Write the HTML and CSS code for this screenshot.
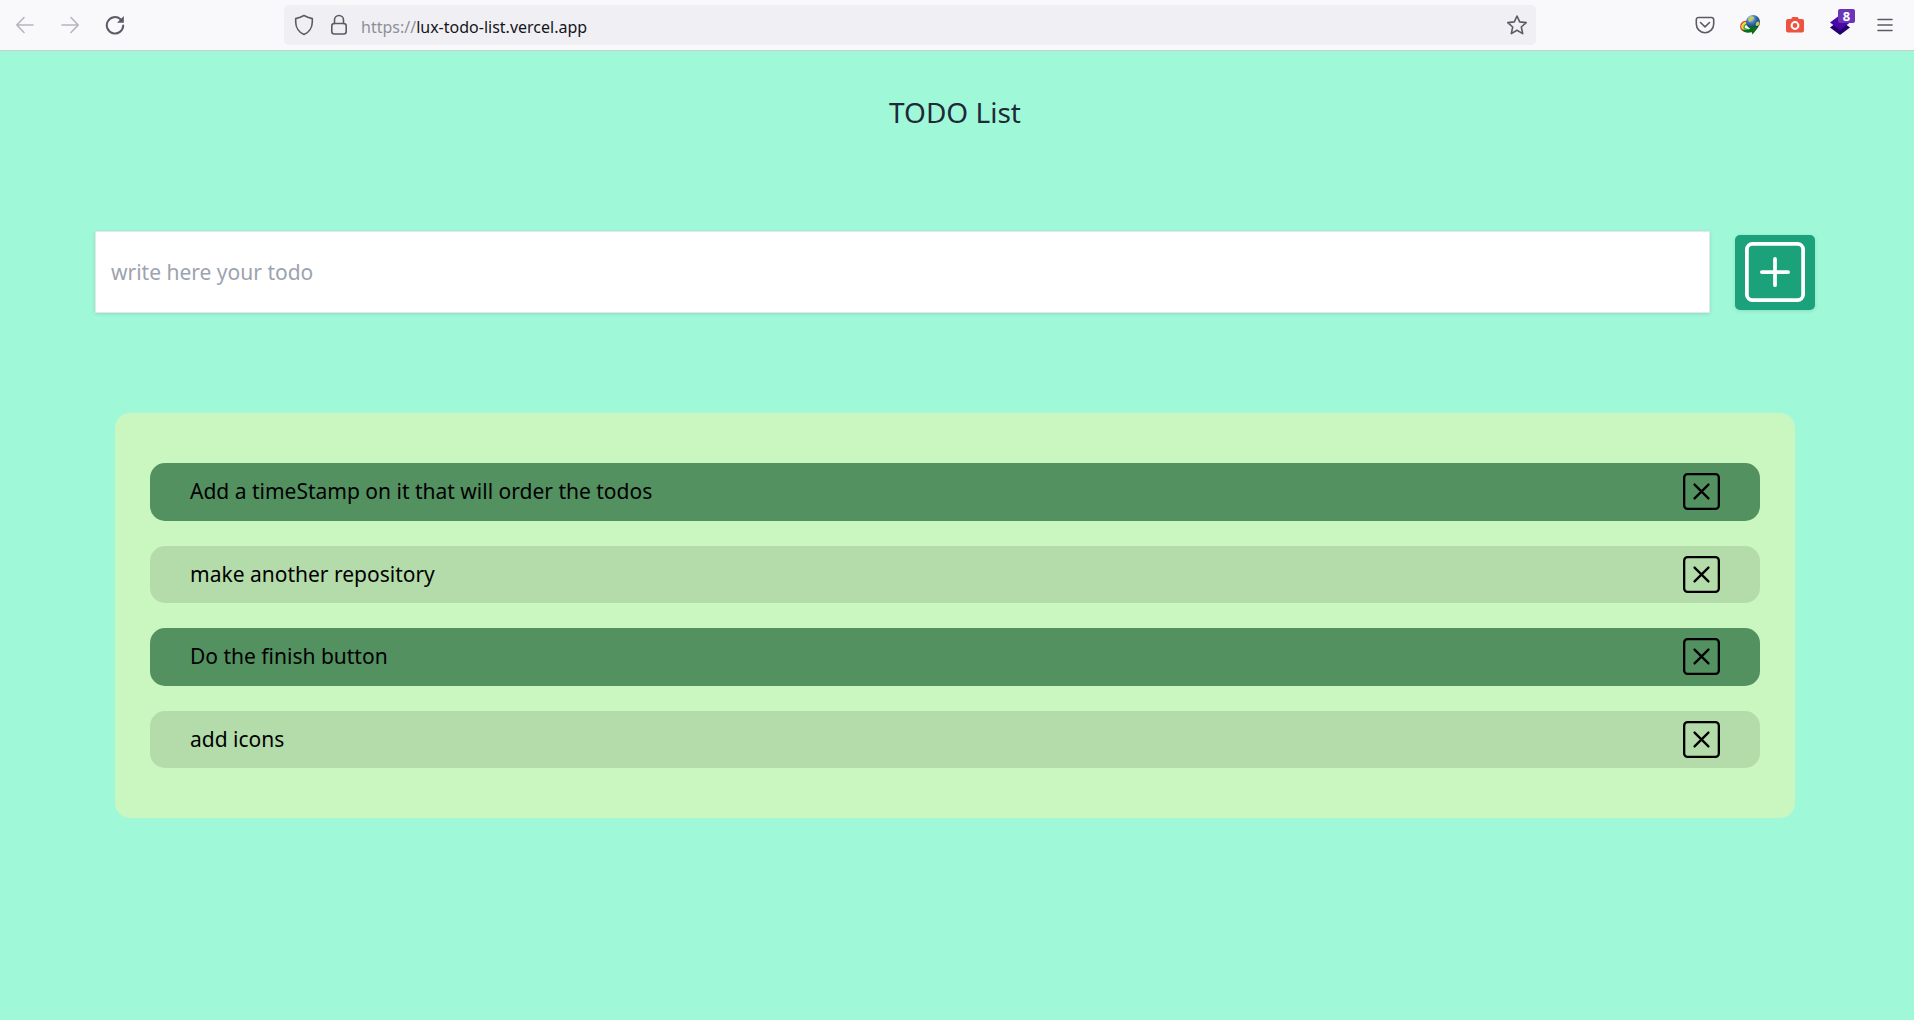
FILE: index.html
```html
<!DOCTYPE html>
<html lang="en">
<head>
<meta charset="utf-8">
<meta name="viewport" content="width=device-width, initial-scale=1">
<title>TODO List</title>
<link rel="stylesheet" href="styles.css">
</head>
<body>
<svg class="sprite" aria-hidden="true">
  <symbol id="x-square" viewBox="0 0 16 16">
    <rect x=".5" y=".5" width="15" height="15" rx="1.5" fill="none" stroke="currentColor"/>
    <path d="M5 5l6 6M11 5l-6 6" fill="none" stroke="currentColor" stroke-linecap="round"/>
  </symbol>
</svg>
<header class="toolbar">
  <nav class="nav" aria-label="History">
    <button class="tool tool--off" aria-label="Back"><svg width="20" height="20" viewBox="0 0 20 20"><path d="M18 10H2M9 2.500L1.800 10L9 17.500"/></svg></button>
    <button class="tool tool--off" aria-label="Forward"><svg width="20" height="20" viewBox="0 0 20 20"><path d="M2 10H18M11 2.500L18.200 10L11 17.500"/></svg></button>
    <button class="tool" aria-label="Reload"><svg width="20" height="20" viewBox="0 0 20 20"><path d="M18.200 10.500A8.200 8.200 0 1 1 15.500 4.200" stroke-width="2"/><path class="solid" d="M18.800 1v6.800H12z"/></svg></button>
  </nav>
  <div class="address">
    <svg width="20" height="22" viewBox="0 0 20 22"><path d="M10 1.500C12.500 3 15.500 4 18.300 4.600V8C18.300 13.500 15 18.500 10 20.500C5 18.500 1.700 13.500 1.700 8V4.600C4.500 4 7.500 3 10 1.500z"/></svg>
    <svg class="lock" width="18" height="22" viewBox="0 0 18 22"><rect x="1.800" y="9.500" width="14.400" height="10.500" rx="2.500"/><path d="M4.500 9.500V6a4.500 4.500 0 0 1 9 0v3.500"/></svg>
    <span class="url"><span class="scheme">https://</span>lux-todo-list.vercel.app</span>
    <button class="tool star" aria-label="Bookmark"><svg width="22" height="22" viewBox="0 0 22 22"><path d="M11 2L13.700 7.900L20.200 8.600L15.300 13L16.700 19.600L11 16.300L5.300 19.600L6.700 13L1.800 8.600L8.300 7.900z"/></svg></button>
  </div>
  <div class="extras">
    <button class="tool" aria-label="Pocket"><svg width="20" height="20" viewBox="0 0 20 20"><path d="M3.500 2.500h13a2.200 2.200 0 0 1 2.200 2.200V9a8.700 8.700 0 0 1-17.400 0V4.700a2.200 2.200 0 0 1 2.200-2.200zM5.500 7.500L10 11.800L14.500 7.500"/></svg></button>
    <button class="tool" aria-label="Download manager">
      <svg class="art" width="20" height="20" viewBox="0 0 20 20">
        <defs><radialGradient id="globe" cx=".35" cy=".25" r=".8"><stop offset="0" stop-color="#cfe6ff"/><stop offset=".4" stop-color="#3f78c0"/><stop offset="1" stop-color="#0b1f4a"/></radialGradient></defs>
        <g fill="none">
          <path d="M7.500 6.200C3 6 .8 8.500 .8 11.500S3 16 6 16.500" stroke="#e0452b" stroke-width="1.400"/>
          <path d="M8 7.600C4 7.400 2.300 9.500 2.300 11.500S4 15.300 7 15.500" stroke="#f7d21b" stroke-width="1.600"/>
          <path d="M8.500 9.200C5.500 9 4 10.500 4 12S5.500 14.500 8 14.500" stroke="#3fae3a" stroke-width="1.600"/>
        </g>
        <circle cx="13" cy="7" r="7" fill="url(#globe)"/>
        <path d="M9 3c1-1.500 4-2 5-.5S11 5 10 7c-1.500-.5-2-2.500-1-4zM17 7c1-1 2.500-.5 2.500 1S18 11.500 16.500 11s-1-3 .5-4z" fill="#c3cf4a"/>
        <path d="M1.500 14C5 16 9 15 10.500 13L9.500 11L18.500 12L12.500 19.500L11.500 17C8 18.500 3.500 17.500 1.500 14z" fill="#0d6d1a"/>
      </svg>
    </button>
    <button class="tool" aria-label="Screenshot">
      <svg class="art" width="20" height="20" viewBox="0 0 20 20"><path d="M3 4h3l1.500-2h5L14 4h3a2 2 0 0 1 2 2v9.500a2 2 0 0 1-2 2H3a2 2 0 0 1-2-2V6a2 2 0 0 1 2-2z" fill="#ee5340"/><circle cx="10" cy="10.500" r="3.400" stroke="#fff" stroke-width="2"/></svg>
    </button>
    <button class="tool layers" aria-label="Extensions, 8 items">
      <svg class="art" width="20" height="20" viewBox="0 0 20 20"><path d="M0 12.500L10 5l10 7.500L10 20z" fill="#25006e"/><path d="M0 7.500L10 0l10 7.500L10 15z" fill="#4a08a8"/></svg>
      <span class="badge">8</span>
    </button>
    <button class="tool" aria-label="Menu"><svg width="20" height="20" viewBox="0 0 20 20"><path d="M3 4.500H17M3 10H17M3 15.500H17"/></svg></button>
  </div>
</header>
<main class="page">
  <h1 class="title">TODO List</h1>
  <form class="entry">
    <input class="field" type="text" placeholder="write here your todo" aria-label="New todo">
    <button class="add" type="button" aria-label="Add todo">
      <svg width="60" height="60" viewBox="0 0 16 16"><rect x=".5" y=".5" width="15" height="15" rx="1.500"/><path d="M8 4.500v7M4.500 8h7"/></svg>
    </button>
  </form>
  <ul class="list">
    <li class="item item--strong"><span>Add a timeStamp on it that will order the todos</span><button class="remove" aria-label="Remove"><svg width="37" height="37"><use href="#x-square"/></svg></button></li>
    <li class="item"><span>make another repository</span><button class="remove" aria-label="Remove"><svg width="37" height="37"><use href="#x-square"/></svg></button></li>
    <li class="item item--strong"><span>Do the finish button</span><button class="remove" aria-label="Remove"><svg width="37" height="37"><use href="#x-square"/></svg></button></li>
    <li class="item"><span>add icons</span><button class="remove" aria-label="Remove"><svg width="37" height="37"><use href="#x-square"/></svg></button></li>
  </ul>
</main>
</body>
</html>
```
FILE: styles.css
```css
* { box-sizing: border-box; }

body {
  margin: 0;
  min-height: 100vh;
  display: flex;
  flex-direction: column;
  background: #9ff9d9;
  color: #000;
  font: 21px/36px "Noto Sans", "Open Sans", sans-serif;
}

button { padding: 0; border: 0; background: none; color: inherit; font: inherit; cursor: pointer; }
svg { display: block; }
.sprite { position: absolute; width: 0; height: 0; }

/* Browser toolbar */
.toolbar {
  display: grid;
  grid-template-columns: 284px minmax(0, 1252px) 1fr;
  align-items: center;
  height: 51px;
  background: #f9f9fb;
  border-bottom: 1px solid #cccccf;
}
.toolbar svg { fill: none; stroke: #5b5b66; stroke-width: 1.6; stroke-linecap: round; stroke-linejoin: round; }
.toolbar .solid { fill: #5b5b66; stroke: none; }
.toolbar .art { stroke: none; overflow: visible; }
.nav { display: flex; gap: 25px; padding-left: 15px; }
.tool { display: block; flex: none; }
.tool--off { opacity: .42; }
.address {
  display: flex;
  align-items: center;
  height: 40px;
  padding: 0 8px 0 10px;
  border-radius: 5px;
  background: #f0f0f4;
}
.lock { margin-left: 16px; }
.url { margin-left: 13px; padding-top: 3px; color: #15141a; font-size: 16px; line-height: 24px; }
.scheme { color: #8f8f96; }
.star { margin-left: auto; }
.extras { display: flex; justify-content: flex-end; gap: 25px; padding-right: 19px; }
.layers { position: relative; }
.badge {
  position: absolute;
  top: -6px;
  left: 8px;
  width: 17px;
  height: 14px;
  border-radius: 2px;
  background: #6a35b8;
  color: #fff;
  font: bold 13px/14px "Open Sans", sans-serif;
  text-align: center;
}

/* Todo page */
.page { padding: 41px 99px 42px 95px; }
.title { margin: 0; color: #1f2937; font-size: 28px; font-weight: 400; line-height: 40px; text-align: center; }
.entry { display: flex; align-items: center; gap: 25px; margin-top: 99px; }
.field {
  flex: 1;
  min-width: 0;
  height: 82px;
  padding: 0 15px;
  border: 1px solid #e5e7eb;
  border-radius: 0;
  background: #fff;
  box-shadow: 0 1px 4px rgba(0, 0, 0, .12);
  color: #000;
  font: inherit;
}
.field::placeholder { color: #9ca3af; opacity: 1; }
.add {
  display: grid;
  place-items: center;
  width: 80px;
  height: 75px;
  border-radius: 5px;
  background: #1ba27a;
  box-shadow: 0 1px 4px rgba(0, 0, 0, .12);
}
.add svg { fill: none; stroke: #fff; stroke-linecap: round; }
.list {
  display: grid;
  gap: 25px;
  margin: 100px 20px 0;
  padding: 50px 35px;
  border-radius: 15px;
  background: #caf7c0;
  list-style: none;
}
.item {
  display: flex;
  align-items: flex-start;
  justify-content: space-between;
  min-height: 57px;
  padding: 10px 40px;
  border-radius: 15px;
  background: #b3dcaa;
}
.item--strong { min-height: 58px; background: #539161; }
.remove { flex: none; }
```
